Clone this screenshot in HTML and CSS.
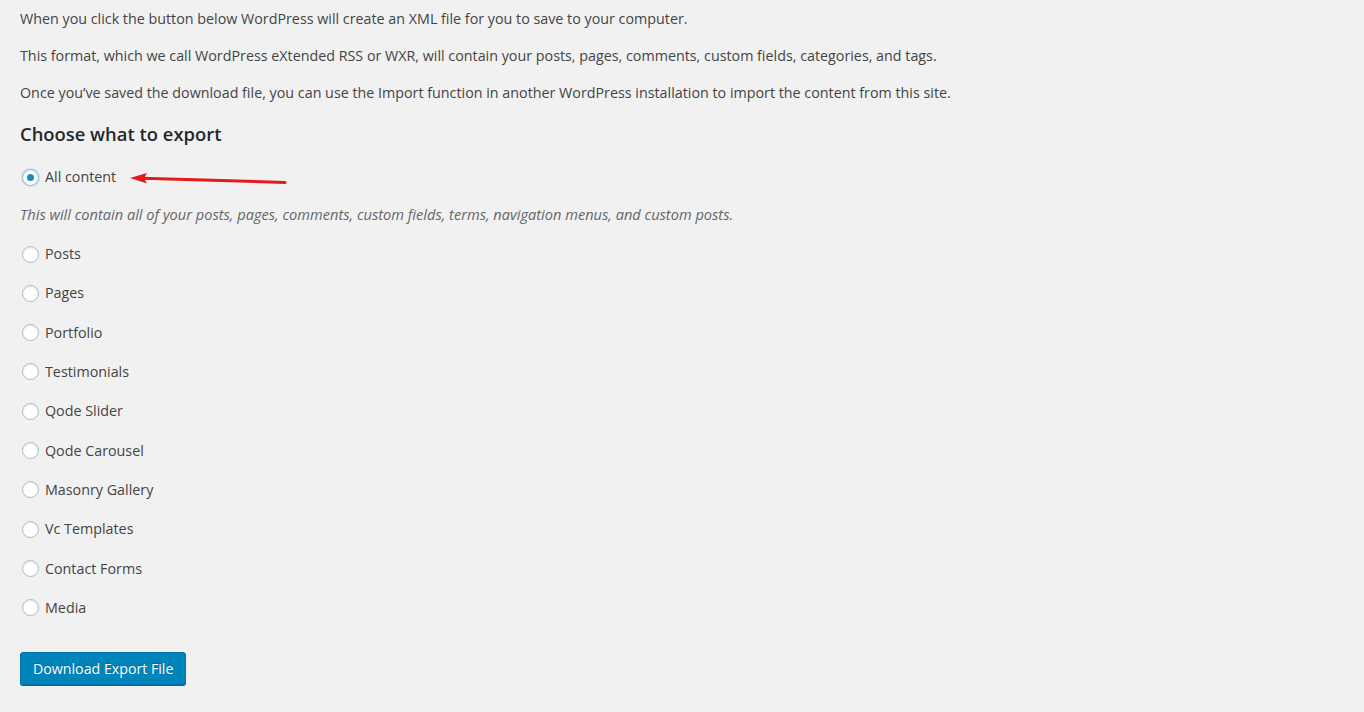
FILE: index.html
```html
<!DOCTYPE html>
<html lang="en">
<head>
<meta charset="utf-8">
<title>Export</title>
<link rel="stylesheet" href="styles.css">
</head>
<body>
<div class="wrap">
  <p class="intro first">When you click the button below WordPress will create an XML file for you to save to your computer.</p>
  <p class="intro">This format, which we call WordPress eXtended RSS or WXR, will contain your posts, pages, comments, custom fields, categories, and tags.</p>
  <p class="intro">Once you’ve saved the download file, you can use the Import function in another WordPress installation to import the content from this site.</p>
  <h2 class="title">Choose what to export</h2>
  <div class="choice all">
    <label class="row"><input type="radio" name="content" checked><span>All content</span></label>
    <svg class="arrow" width="170" height="22" viewBox="0 0 170 22">
      <path d="M14 10.2 L157 14.4" stroke="#e41a1a" stroke-width="3" stroke-linecap="round" fill="none"/>
      <path d="M2 10 L19 5 L16 10.3 L19 15.6 Z" fill="#e41a1a"/>
    </svg>
  </div>
  <p class="desc">This will contain all of your posts, pages, comments, custom fields, terms, navigation menus, and custom posts.</p>
  <ul class="types">
    <li><label class="row"><input type="radio" name="content"><span>Posts</span></label></li>
    <li><label class="row"><input type="radio" name="content"><span>Pages</span></label></li>
    <li><label class="row"><input type="radio" name="content"><span>Portfolio</span></label></li>
    <li><label class="row"><input type="radio" name="content"><span>Testimonials</span></label></li>
    <li><label class="row"><input type="radio" name="content"><span>Qode Slider</span></label></li>
    <li><label class="row"><input type="radio" name="content"><span>Qode Carousel</span></label></li>
    <li><label class="row"><input type="radio" name="content"><span>Masonry Gallery</span></label></li>
    <li><label class="row"><input type="radio" name="content"><span>Vc Templates</span></label></li>
    <li><label class="row"><input type="radio" name="content"><span>Contact Forms</span></label></li>
    <li><label class="row"><input type="radio" name="content"><span>Media</span></label></li>
  </ul>
  <button class="button-primary" type="button">Download Export File</button>
</div>
</body>
</html>
```
FILE: styles.css
```css
html, body {
  margin: 0;
  padding: 0;
  background: #f1f1f1;
}
body {
  font-family: "Open Sans", "Noto Sans", sans-serif;
  font-size: 14.3px;
  color: #444;
  height: 712px;
  overflow: hidden;
}
.wrap {
  padding: 9px 20px 0 20px;
  display: flex;
  flex-direction: column;
  align-items: flex-start;
}
.intro {
  margin: 17px 0 0 0;
  line-height: 20px;
  height: 20px;
  white-space: nowrap;
}
.intro.first {
  margin-top: 0;
}
.title {
  margin: 18px 0 0 0;
  font-size: 18.4px;
  line-height: 26px;
  font-weight: 600;
  color: #23282d;
}
.choice {
  position: relative;
  margin-top: 20px;
}
.row {
  display: flex;
  align-items: center;
  height: 20px;
  line-height: 20px;
}
.row input {
  appearance: none;
  -webkit-appearance: none;
  margin: 0 6px 0 2px;
  width: 17px;
  height: 17px;
  border-radius: 50%;
  border: 1px solid #b4b9be;
  background: #fff;
  box-shadow: inset 0 1px 2px rgba(0,0,0,0.1);
  box-sizing: border-box;
  display: flex;
  align-items: center;
  justify-content: center;
  flex: none;
}
.row input:checked {
  border-color: #9ab9cf;
  box-shadow: 0 0 2px rgba(30,140,190,0.5), inset 0 1px 2px rgba(0,0,0,0.1);
}
.row input:checked::before {
  content: "";
  width: 7px;
  height: 7px;
  border-radius: 50%;
  background: #1e8cbe;
}
.arrow {
  position: absolute;
  left: 108px;
  top: 1px;
}
.desc {
  margin: 17px 0 0 0;
  line-height: 20px;
  font-size: 14.6px;
  font-style: italic;
  color: #666;
}
.types {
  list-style: none;
  margin: 20px 0 0 0;
  padding: 0;
  display: flex;
  flex-direction: column;
  gap: 19.33px;
}
.button-primary {
  margin-top: 34px;
  height: 33px;
  padding: 0 12px;
  background: #0085ba;
  border: 1px solid #0073aa;
  border-radius: 3px;
  box-shadow: 0 1px 0 #006799;
  color: #fff;
  font-family: "Open Sans", "Noto Sans", sans-serif;
  font-size: 14.2px;
  text-shadow: 0 -1px 1px #006799;
}
```
